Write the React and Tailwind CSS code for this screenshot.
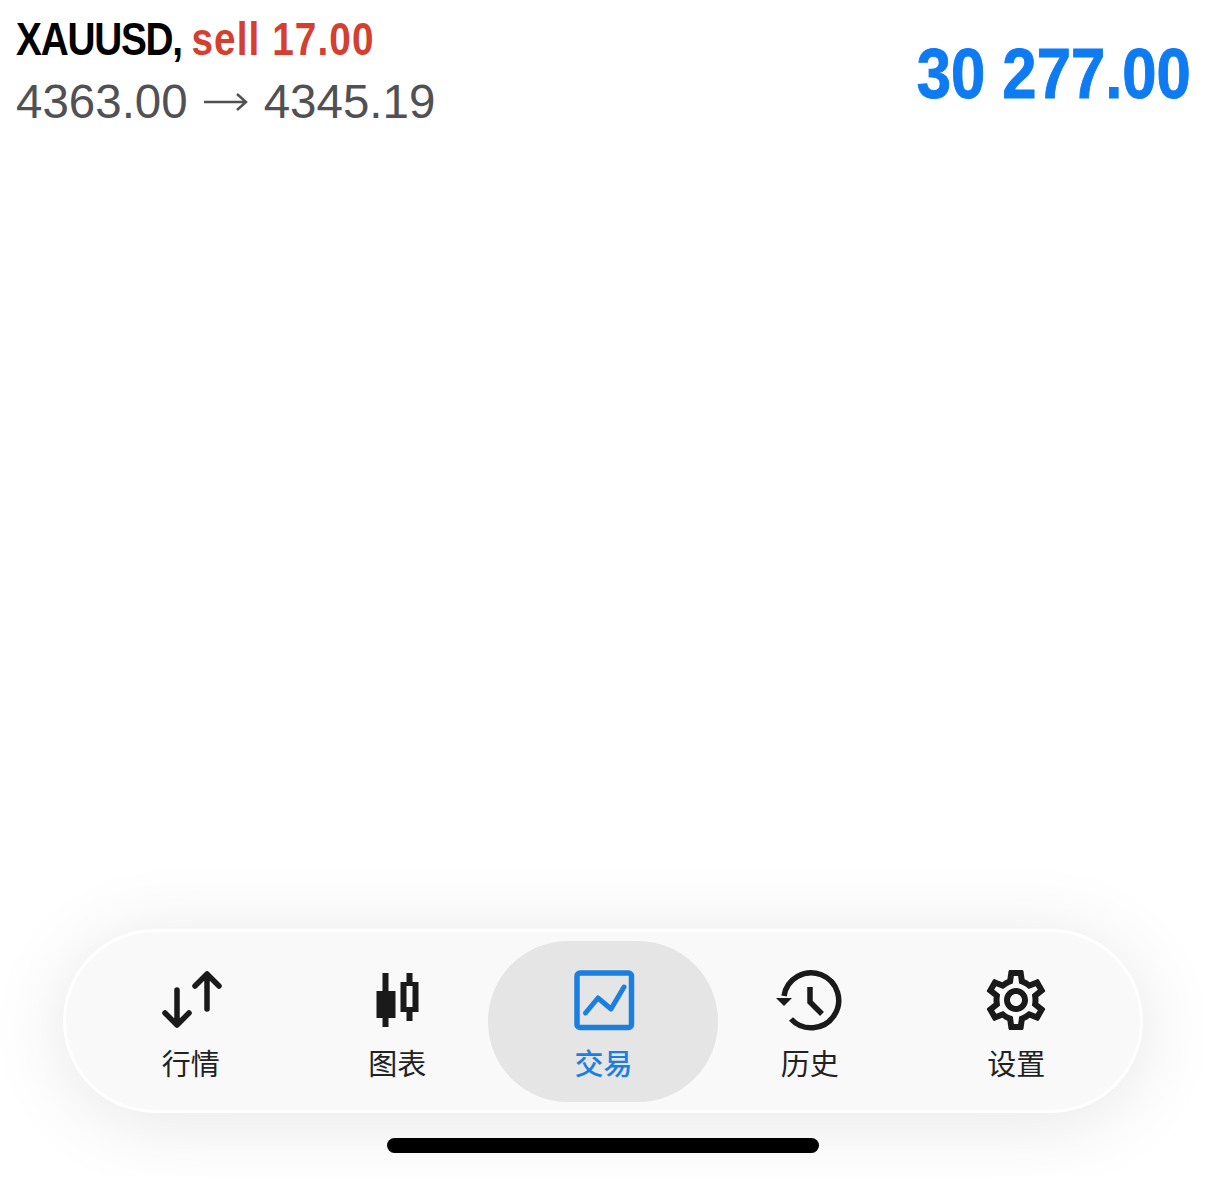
import { MdOutlineSettings } from 'react-icons/md';

function MarketIcon() {
  return (
    <svg viewBox="0 0 64 64" className="h-[64px] w-[64px]" fill="none" stroke="#1a1a1a" strokeWidth="5.500" strokeLinecap="round" strokeLinejoin="round">
      <path d="M18 22v34M6 45l12 12 12-12" />
      <path d="M48 41V7M36 18 48 6l12 12" />
    </svg>
  );
}

function ChartIcon() {
  return (
    <svg viewBox="0 0 64 64" className="h-[64px] w-[64px]" fill="#1a1a1a">
      <rect x="17.500" y="5" width="6" height="54" />
      <rect x="11.500" y="23" width="19" height="27" />
      <rect x="41.500" y="5" width="6" height="9" />
      <rect x="41.500" y="44" width="6" height="9" />
      <path fillRule="evenodd" d="M35.500 14h18v30h-18zM41.500 18v21h6V18z" />
    </svg>
  );
}

function TradeIcon() {
  return (
    <svg viewBox="0 0 64 64" className="h-[64px] w-[64px]" fill="none" stroke="#1a7fe0">
      <rect x="5" y="5" width="54.500" height="54.500" rx="3" strokeWidth="5.500" />
      <path d="M13.500 45 26 30l13 11 13-22" strokeWidth="5" strokeLinecap="round" strokeLinejoin="round" />
    </svg>
  );
}

function HistoryIcon() {
  return (
    <svg viewBox="0 0 64 64" className="h-[64px] w-[64px] overflow-visible" fill="none" stroke="#1a1a1a" strokeWidth="5.500">
      <path d="M6 28A27.500 27.500 0 1 1 13 51" />
      <path d="M-2 30h16l-8 8z" fill="#1a1a1a" stroke="none" />
      <path d="M32 19v15l12 12" />
    </svg>
  );
}

const tabs = [
  { label: '行情', icon: <MarketIcon /> },
  { label: '图表', icon: <ChartIcon /> },
  { label: '交易', icon: <TradeIcon />, active: true },
  { label: '历史', icon: <HistoryIcon /> },
  { label: '设置', icon: <MdOutlineSettings size={72} color="#1a1a1a" className="-my-[4px]" /> },
];

export default function App() {
  return (
    <div className='flex h-[1177px] flex-col overflow-hidden bg-white font-["Liberation_Sans",sans-serif]'>
      {/* header */}
      <div className="flex items-start justify-between pl-[16px] pr-[15px] pt-[11px]">
        <div>
          <div className="h-[52px] origin-left scale-x-[0.825] whitespace-nowrap text-[47px] font-bold leading-[56px] text-black">
            <span className="tracking-[-1.500px]">XAUUSD, </span>
            <span className="tracking-[1.300px] text-[#d43f30]">sell 17.00</span>
          </div>
          <div className="mt-[13px] flex items-center text-[47.500px] leading-[52px] text-[#515155]">
            <span>4363.00</span>
            <svg viewBox="0 0 44 20" className="mx-[16px] h-[20px] w-[44px]" fill="none" stroke="#515155" strokeWidth="2.500">
              <path d="M0 10h42M33 2l9 8-9 8" />
            </svg>
            <span>4345.19</span>
          </div>
        </div>
        <div className="mt-[25px] origin-right scale-x-[0.868] whitespace-nowrap text-[71px] font-bold leading-[76px] text-[#0f7bf2] [-webkit-text-stroke:1px]">
          30 277.00
        </div>
      </div>

      {/* bottom tab bar */}
      <div className="mt-auto flex flex-col items-center pb-[24px]">
        <div className="flex h-[184px] w-[1080px] items-center justify-center rounded-[92px] border-[3px] border-white bg-[#f9f9f9] pl-[1px] shadow-[0_8px_80px_rgba(0,0,0,0.1)]">
          {tabs.map((tab) => (
            <div
              key={tab.label}
              className={`flex h-[161px] shrink-0 flex-col items-center pt-[27px] rounded-[80px] font-["Roboto","Noto_Sans_CJK_SC",sans-serif] ${tab.active ? 'ml-[-13px] mr-[-11px] w-[230px] pl-[2px] bg-[#e5e5e5] text-[#1a7fe0]' : 'w-[206.500px] text-[#222222]'}`}
            >
              {tab.icon}
              <span className={`mt-[15px] text-[29px] leading-[36px] ${tab.active ? 'font-medium' : ''}`}>{tab.label}</span>
            </div>
          ))}
        </div>
        <div className="mt-[25px] h-[15px] w-[432px] rounded-full bg-black" />
      </div>
    </div>
  );
}
